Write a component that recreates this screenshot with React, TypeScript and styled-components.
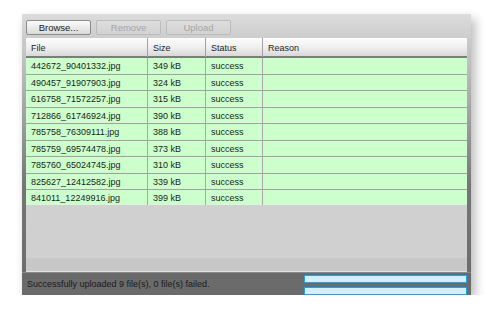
import React from "react";
import styled, { createGlobalStyle } from "styled-components";

interface UploadedFile {
  name: string;
  size: string;
  status: string;
  reason: string;
}

const FILES: UploadedFile[] = [
  { name: "442672_90401332.jpg", size: "349 kB", status: "success", reason: "" },
  { name: "490457_91907903.jpg", size: "324 kB", status: "success", reason: "" },
  { name: "616758_71572257.jpg", size: "315 kB", status: "success", reason: "" },
  { name: "712866_61746924.jpg", size: "390 kB", status: "success", reason: "" },
  { name: "785758_76309111.jpg", size: "388 kB", status: "success", reason: "" },
  { name: "785759_69574478.jpg", size: "373 kB", status: "success", reason: "" },
  { name: "785760_65024745.jpg", size: "310 kB", status: "success", reason: "" },
  { name: "825627_12412582.jpg", size: "339 kB", status: "success", reason: "" },
  { name: "841011_12249916.jpg", size: "399 kB", status: "success", reason: "" },
];

const COLUMNS = "122px 58px 57px 1fr";

const GlobalStyle = createGlobalStyle`
  html, body {
    margin: 0;
    padding: 0;
    background: #ffffff;
  }
  body {
    font-family: "Liberation Sans", Arial, sans-serif;
  }
`;

export default function App() {
  const okCount = FILES.filter((f) => f.status === "success").length;
  const failCount = FILES.length - okCount;

  return (
    <>
      <GlobalStyle />
      <Page>
        <Panel>
          <Toolbar>
            <Button>Browse...</Button>
            <Button disabled>Remove</Button>
            <Button disabled>Upload</Button>
          </Toolbar>

          <Grid>
            <HeaderRow>
              <HeaderCell>File</HeaderCell>
              <HeaderCell>Size</HeaderCell>
              <HeaderCell>Status</HeaderCell>
              <HeaderCell $last>Reason</HeaderCell>
            </HeaderRow>

            <Body>
              {FILES.map((file) => (
                <Row key={file.name}>
                  <Cell>{file.name}</Cell>
                  <Cell>{file.size}</Cell>
                  <Cell>{file.status}</Cell>
                  <Cell $last>{file.reason}</Cell>
                </Row>
              ))}
            </Body>

            <ScrollTrack />
          </Grid>

          <StatusBar>
            <StatusText>
              Successfully uploaded {okCount} file(s), {failCount} file(s) failed.
            </StatusText>
            <Progress>
              <ProgressBar />
              <ProgressBar />
            </Progress>
          </StatusBar>
        </Panel>
      </Page>
    </>
  );
}

const Page = styled.div`
  padding: 14px 0 0 22px;
`;

const Panel = styled.div`
  width: 449px;
  height: 281px;
  display: flex;
  flex-direction: column;
  overflow: hidden;
  background: linear-gradient(
    to bottom,
    #d4d4d4 0px,
    #c4c4c4 40px,
    #9c9c9c 110px,
    #767676 170px,
    #6b6b6b 100%
  );
  box-shadow: 4px 5px 10px rgba(0, 0, 0, 0.28);
`;

const Toolbar = styled.div`
  height: 24px;
  flex: none;
  display: flex;
  align-items: flex-start;
  gap: 5px;
  padding: 6px 4px 0;
  box-sizing: border-box;
  background: linear-gradient(to bottom, #dcdcdc, #cdcdcd);
`;

const Button = styled.button`
  width: 65px;
  height: 15px;
  padding: 0;
  margin: 0;
  border: 1px solid ${(p) => (p.disabled ? "#bcbcbc" : "#8c8c8c")};
  border-radius: 2px;
  background: ${(p) =>
    p.disabled
      ? "linear-gradient(to bottom, #dedede, #d2d2d2)"
      : "linear-gradient(to bottom, #fbfbfb, #dadada)"};
  color: ${(p) => (p.disabled ? "#a6a6a6" : "#1a1a1a")};
  font-family: "Liberation Sans", Arial, sans-serif;
  font-size: 9.5px;
  line-height: 13px;
  text-align: center;
`;

const Grid = styled.div`
  flex: 1;
  display: flex;
  flex-direction: column;
  margin: 0 4px;
  background: #d0d0d0;
  border-bottom: 1px solid #e2e2e2;
`;

const HeaderRow = styled.div`
  display: grid;
  grid-template-columns: ${COLUMNS};
  height: 20px;
  box-sizing: border-box;
  flex: none;
  background: linear-gradient(to bottom, #fdfdfd 0%, #f0f0f0 50%, #d9d9d9 100%);
  border-bottom: 2px solid #7c7c7c;
`;

const HeaderCell = styled.div<{ $last?: boolean }>`
  padding: 2px 0 0 5px;
  font-size: 9px;
  line-height: 17px;
  color: #1e1e1e;
  border-right: ${(p) => (p.$last ? "none" : "1px solid #a2a2a2")};
`;

const Body = styled.div`
  flex: 1;
  display: flex;
  flex-direction: column;
`;

const Row = styled.div`
  display: grid;
  grid-template-columns: ${COLUMNS};
  height: 16.5px;
  box-sizing: border-box;
  background: #ccffcc;
  border-bottom: 1.5px solid #a2a2a2;

  &:last-child {
    border-bottom: none;
    height: 15px;
  }
`;

const Cell = styled.div<{ $last?: boolean }>`
  padding-left: 5px;
  font-size: 9px;
  line-height: 16.5px;
  color: #1c1c1c;
  white-space: nowrap;
  overflow: hidden;
  border-right: ${(p) => (p.$last ? "none" : "1px solid #a8a8a8")};
`;

const ScrollTrack = styled.div`
  height: 13px;
  flex: none;
  background: #c7c7c7;
`;

const StatusBar = styled.div`
  height: 22px;
  flex: none;
  display: flex;
  align-items: flex-start;
  justify-content: space-between;
  padding: 0 4px 0 5px;
  background: #6b6b6b;
  border-top: 1px solid #8a8a8a;
`;

const StatusText = styled.div`
  font-size: 9px;
  line-height: 22px;
  color: #1a1a1a;
  white-space: nowrap;
`;

const Progress = styled.div`
  width: 163px;
  display: flex;
  flex-direction: column;
  gap: 4px;
  padding-top: 2px;
`;

const ProgressBar = styled.div`
  height: 8px;
  box-sizing: border-box;
  border: 1px solid #1fa2ea;
  background: #d3eeff;
`;
